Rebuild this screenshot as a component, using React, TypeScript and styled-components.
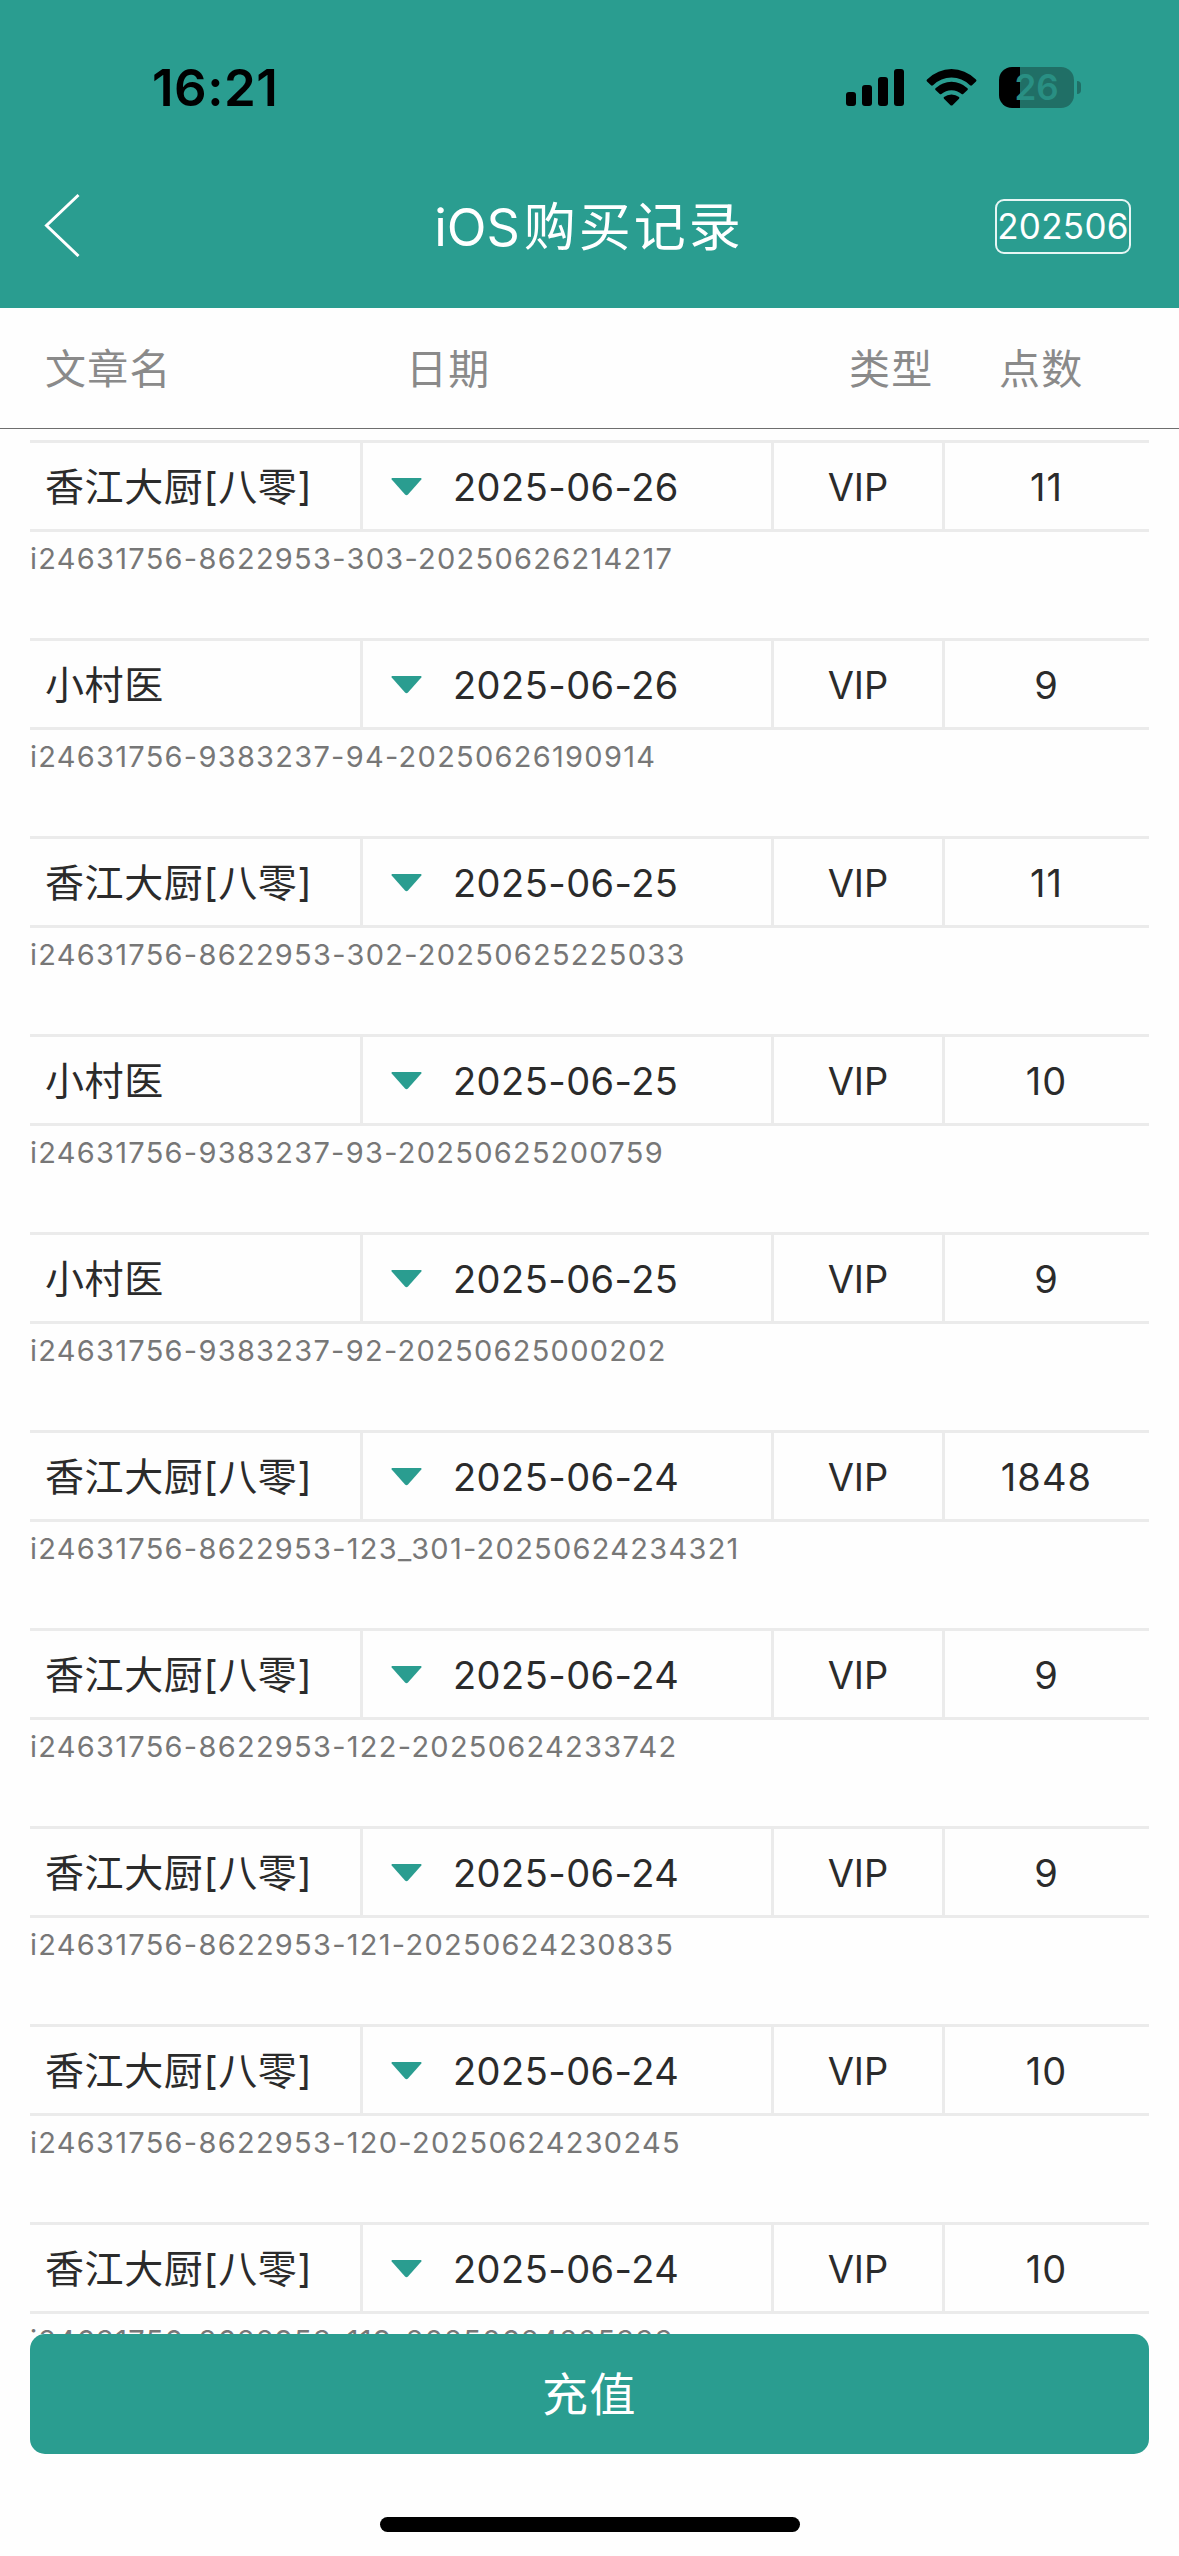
import React from "react";
import styled, { createGlobalStyle } from "styled-components";

const TEAL = "#2a9d90";
const LINE = "#ebebeb";

const GlobalStyle = createGlobalStyle`
  * { box-sizing: border-box; }
  body {
    margin: 0;
    background: #fefefe;
    font-family: Inter, "Noto Sans CJK SC", sans-serif;
    font-weight: 400;
  }
`;

const Screen = styled.div`
  width: 1179px;
  height: 2556px;
  display: flex;
  flex-direction: column;
  overflow: hidden;
  background: #fefefe;
`;

const Header = styled.header`
  height: 308px;
  flex: none;
  background: ${TEAL};
`;

const StatusBar = styled.div`
  height: 141px;
  display: flex;
  justify-content: space-between;
  padding: 67px 98px 0 152px;
`;

const Clock = styled.time`
  font-size: 51px;
  line-height: 42px;
  font-weight: 600;
  letter-spacing: 0.5px;
  color: #000;
`;

const StatusIcons = styled.div`
  display: flex;
  height: 41px;
  align-items: center;
`;

const SignalIcon = styled.svg`
  width: 58px;
  height: 37px;
  margin-right: 22px;
`;

const WifiIcon = styled.svg`
  width: 51px;
  height: 37px;
  margin-right: 22px;
`;

const Battery = styled.div`
  width: 75px;
  height: 41px;
  border-radius: 13px;
  display: flex;
  align-items: center;
  justify-content: center;
  background: linear-gradient(to right, #000 21px, #206f66 21px);
`;

const BatteryLevel = styled.span`
  font-size: 35px;
  line-height: 41px;
  font-weight: 600;
  color: #298f83;
`;

const BatteryTip = styled.i`
  width: 4px;
  height: 13px;
  margin-left: 3px;
  border-radius: 0 4px 4px 0;
  background: #206f66;
`;

const NavBar = styled.div`
  height: 167px;
  display: grid;
  grid-template-columns: 200px 1fr 200px;
  align-items: center;
  padding: 0 48px 0 43px;
`;

const BackButton = styled.button`
  display: flex;
  padding: 0;
  border: 0;
  background: none;
`;

const Title = styled.h1`
  margin: 7px 0 0 4px;
  text-align: center;
  font-size: 52px;
  line-height: 70px;
  font-weight: 400;
  letter-spacing: 3px;
  color: #fff;
`;

const TitleLead = styled.span`
  margin-right: 4px;
  letter-spacing: 0;
`;

const MonthButton = styled.button`
  justify-self: end;
  width: 136px;
  height: 55px;
  margin-top: 4px;
  padding: 0;
  border: 2px solid #e6f6f4;
  border-radius: 9px;
  background: none;
  font-family: inherit;
  font-size: 35px;
  line-height: 49px;
  letter-spacing: 0.3px;
  text-align: center;
  white-space: nowrap;
  color: #fff;
`;

const ColumnHeads = styled.div`
  flex: none;
  height: 121px;
  display: grid;
  grid-template-columns: 361px 443px 150px 1fr;
  align-items: center;
  padding: 2px 0 0 45px;
  border-bottom: 1px solid #6e6e6e;
`;

const ColumnHead = styled.span`
  font-size: 41px;
  line-height: 60px;
  letter-spacing: 1.2px;
  color: #8a8a8a;
`;

const List = styled.main`
  height: 1905px;
  flex: none;
  padding: 11px 30px 0;
  overflow: hidden;
`;

const Entry = styled.article`
  height: 198px;
`;

const Cells = styled.div`
  height: 92px;
  display: grid;
  grid-template-columns: 333px 411px 171px 1fr;
  border-top: 3px solid ${LINE};
  border-bottom: 3px solid ${LINE};
`;

const Cell = styled.div`
  display: flex;
  align-items: center;
  padding-top: 2px;
  border-right: 3px solid ${LINE};
  font-size: 38px;
  line-height: 56px;
  letter-spacing: 0.45px;
  white-space: nowrap;
  color: #2b2b2b;
`;

const NameCell = styled(Cell)`
  padding-left: 15px;
  font-size: 39px;
  letter-spacing: 0.6px;
`;

const DateCell = styled(Cell)`
  padding-left: 28px;
`;

const TypeCell = styled(Cell)`
  justify-content: center;
  letter-spacing: 0;
`;

const PointsCell = styled(Cell)`
  justify-content: center;
  padding-right: 1px;
  border-right: 0;
  letter-spacing: 1.1px;
`;

const Caret = styled.svg`
  width: 31px;
  height: 18px;
  margin-right: 31px;
`;

const OrderNo = styled.p`
  margin: 9px 0 0;
  font-size: 29px;
  line-height: 36px;
  letter-spacing: 1.27px;
  white-space: nowrap;
  color: #777;
`;

const Footer = styled.footer`
  flex: 1;
  display: flex;
  flex-direction: column;
  align-items: center;
`;

const RechargeButton = styled.button`
  width: 1119px;
  height: 120px;
  padding: 0 0 6px;
  border: 0;
  border-radius: 15px;
  background: ${TEAL};
  font-family: inherit;
  font-size: 46px;
  letter-spacing: 1.5px;
  color: #fff;
`;

const HomeIndicator = styled.div`
  width: 420px;
  height: 15px;
  margin-top: 63px;
  border-radius: 8px;
  background: #000;
`;

const CHEF = "香江大厨[八零]";
const DOCTOR = "小村医";

const entries = [
  { name: CHEF, date: "2025-06-26", points: 11, order: "i24631756-8622953-303-20250626214217" },
  { name: DOCTOR, date: "2025-06-26", points: 9, order: "i24631756-9383237-94-20250626190914" },
  { name: CHEF, date: "2025-06-25", points: 11, order: "i24631756-8622953-302-20250625225033" },
  { name: DOCTOR, date: "2025-06-25", points: 10, order: "i24631756-9383237-93-20250625200759" },
  { name: DOCTOR, date: "2025-06-25", points: 9, order: "i24631756-9383237-92-20250625000202" },
  { name: CHEF, date: "2025-06-24", points: 1848, order: "i24631756-8622953-123_301-20250624234321" },
  { name: CHEF, date: "2025-06-24", points: 9, order: "i24631756-8622953-122-20250624233742" },
  { name: CHEF, date: "2025-06-24", points: 9, order: "i24631756-8622953-121-20250624230835" },
  { name: CHEF, date: "2025-06-24", points: 10, order: "i24631756-8622953-120-20250624230245" },
  { name: CHEF, date: "2025-06-24", points: 10, order: "i24631756-8622953-119-20250624225333" },
];

export default function App() {
  return (
    <Screen>
      <GlobalStyle />
      <Header>
        <StatusBar>
          <Clock>16:21</Clock>
          <StatusIcons>
            <SignalIcon viewBox="0 0 58 37">
              <rect x="0" y="23" width="10" height="14" rx="3" />
              <rect x="16" y="16" width="10" height="21" rx="3" />
              <rect x="32" y="8" width="10" height="29" rx="3" />
              <rect x="48" y="0" width="10" height="37" rx="3" />
            </SignalIcon>
            <WifiIcon viewBox="0 0 51 37">
              <path d="M1 10.5 Q12 0 25.5 0 T50 10.5 Q51 11.500 50 12.500 L46 16.300 Q45 17 44 16.200 Q36 8.500 25.500 8.500 T7 16.200 Q6 17 5 16.300 L1 12.500 Q0 11.500 1 10.500Z" />
              <path d="M9.500 19.300 Q16.500 12.800 25.500 12.800 T41.500 19.300 Q42.300 20.200 41.500 21 L37.200 25 Q36.400 25.600 35.600 25 Q31.300 21.200 25.500 21.200 T15.400 25 Q14.600 25.600 13.800 25 L9.500 21 Q8.700 20.200 9.500 19.300Z" />
              <path d="M18 28 Q21.200 25.500 25.500 25.500 T33 28 Q33.800 28.800 33 29.700 L26.500 36.200 Q25.500 37 24.500 36.200 L18 29.700 Q17.200 28.800 18 28Z" />
            </WifiIcon>
            <Battery>
              <BatteryLevel>26</BatteryLevel>
            </Battery>
            <BatteryTip />
          </StatusIcons>
        </StatusBar>
        <NavBar>
          <BackButton aria-label="返回">
            <svg width="38" height="64" viewBox="0 0 38 64" fill="none" stroke="#fff" strokeWidth="3">
              <path d="M35.500 2 L3.500 32.500 L35.500 63" />
            </svg>
          </BackButton>
          <Title>
            <TitleLead>iOS</TitleLead>购买记录
          </Title>
          <MonthButton>202506</MonthButton>
        </NavBar>
      </Header>
      <ColumnHeads>
        <ColumnHead>文章名</ColumnHead>
        <ColumnHead>日期</ColumnHead>
        <ColumnHead>类型</ColumnHead>
        <ColumnHead>点数</ColumnHead>
      </ColumnHeads>
      <List>
        {entries.map((entry) => (
          <Entry key={entry.order}>
            <Cells>
              <NameCell>{entry.name}</NameCell>
              <DateCell>
                <Caret viewBox="0 0 31 18">
                  <path d="M1 0H30Q31 .5 30.300 1.500L17 16.500Q15.500 18 14 16.500L.7 1.500Q0 .5 1 0Z" fill={TEAL} />
                </Caret>
                {entry.date}
              </DateCell>
              <TypeCell>VIP</TypeCell>
              <PointsCell>{entry.points}</PointsCell>
            </Cells>
            <OrderNo>{entry.order}</OrderNo>
          </Entry>
        ))}
      </List>
      <Footer>
        <RechargeButton>充值</RechargeButton>
        <HomeIndicator />
      </Footer>
    </Screen>
  );
}
